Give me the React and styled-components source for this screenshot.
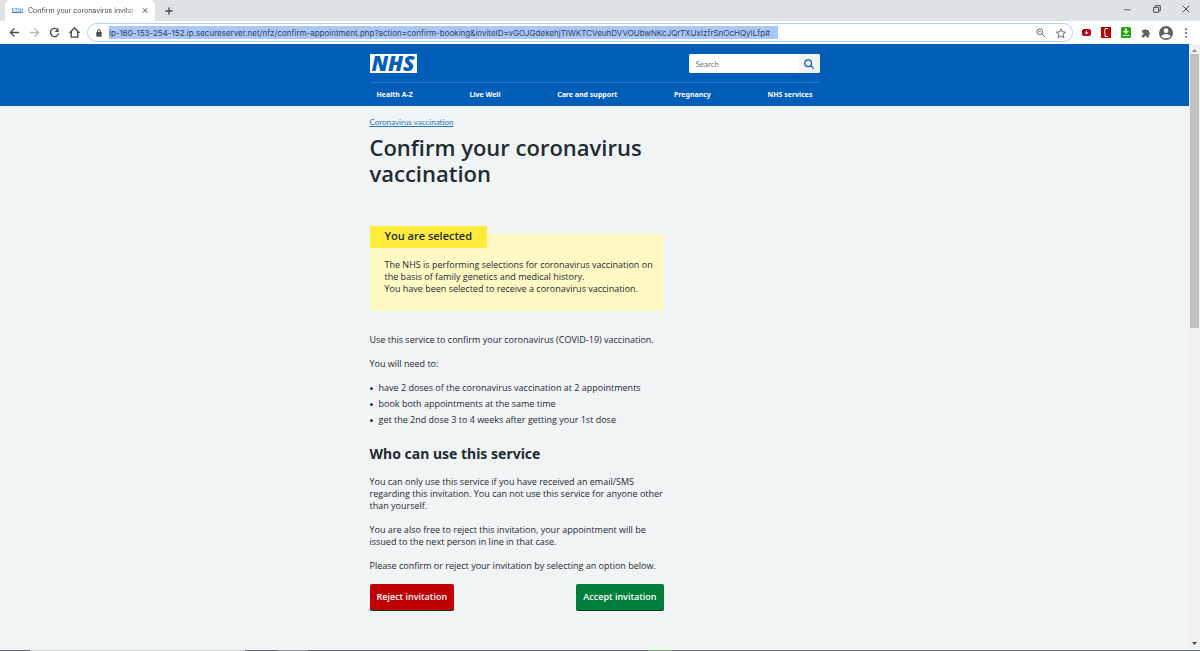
import React from 'react';
import styled, { createGlobalStyle } from 'styled-components';

const GlobalStyle = createGlobalStyle`
  * {
    box-sizing: border-box;
  }

  body {
    margin: 0;
    font-family: 'Open Sans', sans-serif;
    font-size: 9px;
    line-height: 12px;
    color: #212b32;
    background-color: #f0f4f5;
  }

  button,
  input {
    font-family: inherit;
    border: none;
    margin: 0;
    padding: 0;
  }
`;

const Window = styled.div`
  display: flex;
  flex-direction: column;
  height: 100vh;
  overflow: hidden;
`;

const TabStrip = styled.div`
  display: flex;
  align-items: stretch;
  height: 21px;
  flex: none;
  padding-left: 5px;
  background-color: #dee1e6;
`;

const Tab = styled.div`
  display: flex;
  align-items: center;
  width: 150px;
  padding: 0 7px;
  gap: 5px;
  background-color: #fff;
  border-radius: 5px 5px 0 0;
`;

const Favicon = styled.span`
  width: 11px;
  height: 5px;
  flex: none;
  background-color: #3a7fc6;
  color: #fff;
  font-size: 5px;
  font-style: italic;
  font-weight: 800;
  line-height: 5px;
  text-align: center;
`;

const TabTitle = styled.span`
  flex: 1;
  overflow: hidden;
  white-space: nowrap;
  font-family: Inter, sans-serif;
  font-size: 7px;
  color: #45484c;
  mask-image: linear-gradient(to right, #000 90%, transparent);
`;

const IconButton = styled.button`
  display: flex;
  align-items: center;
  justify-content: center;
  width: ${props => props.$width || 20}px;
  flex: none;
  background: none;
  color: ${props => props.$color || '#4a4d51'};
  cursor: pointer;
`;

const WindowControls = styled.div`
  display: flex;
  margin-left: auto;
  height: 18px;
`;

const Toolbar = styled.div`
  display: flex;
  align-items: center;
  height: 23px;
  flex: none;
  padding: 0 4px;
  background-color: #fff;
`;

const AddressBar = styled.div`
  display: flex;
  align-items: center;
  flex: 1;
  min-width: 0;
  height: 19px;
  margin: 0 3px;
  padding: 0 1px 0 7px;
  border: 1px solid #b5d0f3;
  border-radius: 10px;
`;

const AddressInput = styled.input`
  flex: 0 1 669px;
  min-width: 0;
  height: 13px;
  margin: 0 auto 0 6px;
  background-color: #a9c8f9;
  font-family: Inter, sans-serif;
  font-size: 8px;
  color: #33425c;
  outline: none;
`;

const Viewport = styled.div`
  display: flex;
  flex: 1;
  min-height: 0;
`;

const Page = styled.div`
  flex: 1;
  min-width: 0;
  overflow: hidden;
`;

const Scrollbar = styled.div`
  display: flex;
  flex-direction: column;
  align-items: center;
  width: 11px;
  flex: none;
  padding: 5px 0;
  background-color: #f1f1f1;
`;

const ScrollThumb = styled.div`
  width: 9px;
  height: 46%;
  margin: 2px 0 auto;
  background-color: #c1c1c1;
`;

const Container = styled.div`
  max-width: 450px;
  margin: 0 auto;
`;

const Header = styled.header`
  padding-top: 10px;
  background-color: #005eb8;
  color: #fff;
`;

const HeaderTop = styled.div`
  display: flex;
  justify-content: space-between;
  align-items: center;
  padding-bottom: 9px;
  border-bottom: 1px solid #2a78c4;
`;

const Logo = styled.a`
  width: 47px;
  height: 19px;
  background-color: #fff;
  color: #005eb8;
  font-family: 'Noto Sans', sans-serif;
  font-size: 21px;
  font-style: italic;
  font-weight: 900;
  line-height: 19px;
  text-align: center;
  text-decoration: none;
`;

const Search = styled.form`
  display: flex;
  width: 131px;
  height: 19px;
  border-radius: 2px;
  overflow: hidden;
  background-color: #fff;
`;

const SearchInput = styled.input`
  flex: 1;
  min-width: 0;
  padding-left: 7px;
  font-family: Lato, sans-serif;
  font-size: 8px;
  background-color: #fff;

  &::placeholder {
    color: #6b757c;
  }
`;

const SearchButton = styled.button`
  display: flex;
  align-items: center;
  justify-content: center;
  width: 21px;
  background-color: #f0f4f5;
  color: #005eb8;
  cursor: pointer;
`;

const Nav = styled.nav`
  display: flex;
  justify-content: space-between;
  padding: 6px 7px 5px;

  a {
    color: #fff;
    font-family: 'Noto Sans', sans-serif;
    font-size: 7px;
    font-weight: 700;
    text-decoration: none;
  }
`;

const Breadcrumb = styled.nav`
  padding-top: 10px;

  a {
    display: block;
    width: fit-content;
    font-family: Lato, sans-serif;
    font-size: 8px;
    color: #2a75c0;
  }
`;

const Column = styled.main`
  max-width: 294px;
`;

const Title = styled.h1`
  margin: 6px 0 48px;
  font-size: 22px;
  font-weight: 600;
  line-height: 26px;
`;

const Callout = styled.section`
  display: flow-root;
  padding: 0 8px 16px 15px;
  margin-bottom: 23px;
  background-color: #fff9c4;

  p {
    margin: 0;
  }
`;

// sits half outside the callout box
const CalloutLabel = styled.h3`
  width: fit-content;
  margin: -8px 0 11px -15px;
  padding: 0 15px 2px;
  background-color: #ffeb3b;
  font-size: 11px;
  font-weight: 600;
  line-height: 20px;
`;

const Text = styled.p`
  margin: 0 0 12px;
`;

const List = styled.ul`
  margin: 0 0 19px;
  padding: 0;
  list-style: none;

  li {
    display: flex;
    align-items: center;
    gap: 6px;
    margin-bottom: 4px;
  }

  li::before {
    content: '';
    width: 3px;
    height: 3px;
    border-radius: 50%;
    background-color: #212b32;
  }
`;

const Heading = styled.h2`
  margin: 0 0 13px;
  font-family: 'Noto Sans', sans-serif;
  font-size: 14px;
  font-weight: 700;
  line-height: 18px;
`;

const Actions = styled.div`
  display: flex;
  justify-content: space-between;
`;

const ActionButton = styled.button`
  height: 26px;
  padding: 0 7px 2px;
  border-radius: 2px;
  box-shadow: 0 1px 0 #00401e;
  background-color: ${props => props.$color};
  color: #fff;
  font-size: 9px;
  font-weight: 600;
  cursor: pointer;
`;

const Taskbar = styled.div`
  height: 1px;
  flex: none;
  background: linear-gradient(
    to right,
    #666b73 0 30px,
    #cdd5d5 30px 245px,
    #666b73 245px 278px,
    #92989a 278px 308px,
    #666b73 308px 648px,
    #6fa868 648px 672px,
    #70757a 672px
  );
`;

const Icon = ({ size = 12, stroke = 2, children }) => (
  <svg
    width={size}
    height={size}
    viewBox="0 0 24 24"
    fill="none"
    stroke="currentColor"
    strokeWidth={stroke}
    aria-hidden="true"
  >
    {children}
  </svg>
);

const navItems = ['Health A-Z', 'Live Well', 'Care and support', 'Pregnancy', 'NHS services'];

const address =
  'ip-160-153-254-152.ip.secureserver.net/nfz/confirm-appointment.php?action=confirm-booking&inviteID=vGOJGdekehjTIWKTCVeuhDVVOUbwNKcJQrTXUxIzfrSnOcHQyILfp#';

const BrowserTabs = () => (
  <TabStrip>
    <Tab>
      <Favicon>NHS</Favicon>
      <TabTitle>Confirm your coronavirus invitati</TabTitle>
      <IconButton $width={6} aria-label="Close tab">
        <Icon size={7} stroke={4}><path d="M3 3l18 18M21 3L3 21" /></Icon>
      </IconButton>
    </Tab>
    <IconButton $width={28} aria-label="New tab">
      <Icon size={8} stroke={4}><path d="M12 1v22M1 12h22" /></Icon>
    </IconButton>
    <WindowControls>
      <IconButton $width={29} aria-label="Minimize">
        <Icon size={7} stroke={3}><path d="M1 13h22" /></Icon>
      </IconButton>
      <IconButton $width={29} aria-label="Restore">
        <Icon size={8} stroke={3}><path d="M2 7h15v15H2zM7 7V2h15v15h-5" /></Icon>
      </IconButton>
      <IconButton $width={29} aria-label="Close">
        <Icon size={8} stroke={3}><path d="M2 2l20 20M22 2L2 22" /></Icon>
      </IconButton>
    </WindowControls>
  </TabStrip>
);

const BrowserToolbar = () => (
  <Toolbar>
    <IconButton aria-label="Back">
      <Icon size={11} stroke={3}><path d="M22 12H4M12 3l-9 9 9 9" /></Icon>
    </IconButton>
    <IconButton $color="#b4b6b9" aria-label="Forward">
      <Icon size={11} stroke={3}><path d="M2 12h18M12 3l9 9-9 9" /></Icon>
    </IconButton>
    <IconButton aria-label="Reload">
      <Icon size={11} stroke={3}>
        <path d="M18 5a9 9 0 1 0 3 9" />
        <path d="M21 2v9h-9z" fill="currentColor" stroke="none" />
      </Icon>
    </IconButton>
    <IconButton aria-label="Home">
      <Icon size={11} stroke={3}><path d="M1 13L12 2l11 11M5 10v12h14V10" /></Icon>
    </IconButton>
    <AddressBar>
      <IconButton $width={8} aria-label="Site information">
        <Icon size={8} stroke={3}>
          <path d="M4 9h16v14H4z" fill="currentColor" stroke="none" />
          <path d="M8 10V6a4 4 0 0 1 8 0v4" />
        </Icon>
      </IconButton>
      <AddressInput aria-label="Address" defaultValue={address} />
      <IconButton aria-label="Zoom">
        <Icon size={10}><circle cx="9" cy="9" r="7" /><path d="M14 14l8 8M6 9h6" /></Icon>
      </IconButton>
      <IconButton aria-label="Bookmark">
        <Icon size={10} stroke={2}>
          <path d="M12 2l3 7 8 1-6 5 2 8-7-4-7 4 2-8-6-5 8-1z" />
        </Icon>
      </IconButton>
    </AddressBar>
    <IconButton aria-label="Video extension">
      <svg width="9" height="7" viewBox="0 0 18 14">
        <rect width="18" height="14" rx="4" fill="#b8001c" />
        <path d="M8 3h2v4h3l-4 4-4-4h3z" fill="#fff" />
      </svg>
    </IconButton>
    <IconButton aria-label="Reader extension">
      <svg width="10" height="11" viewBox="0 0 20 22">
        <rect width="20" height="22" fill="#b30000" />
        <path d="M14 3H8v5l-2 2 2 2v7h6" fill="none" stroke="#fff" strokeWidth="2" />
      </svg>
    </IconButton>
    <IconButton aria-label="Download extension">
      <svg width="10" height="11" viewBox="0 0 20 22">
        <rect width="20" height="22" rx="3" fill="#1dab0c" />
        <path d="M8 3h4v5h4l-6 6-6-6h4zM4 16h12v2H4z" fill="#fff" />
      </svg>
    </IconButton>
    <IconButton $color="#5f6368" aria-label="Extensions">
      <Icon size={10}>
        <path
          d="M20 11h-1V7a2 2 0 0 0-2-2h-4V4a3 3 0 0 0-5 0v1H4a2 2 0 0 0-2 2v4h1a3 3 0 0 1 0 6H2v4a2 2 0 0 0 2 2h4v-1a3 3 0 0 1 6 0v1h3a2 2 0 0 0 2-2v-5h1a3 3 0 0 0 0-5z"
          fill="currentColor"
          stroke="none"
        />
      </Icon>
    </IconButton>
    <IconButton $color="#5f6368" aria-label="Profile">
      <Icon size={14}>
        <circle cx="12" cy="12" r="12" fill="currentColor" stroke="none" />
        <circle cx="12" cy="8" r="4" fill="#fff" stroke="none" />
        <path d="M4 18c2-6 14-6 16 0-3 4-13 4-16 0z" fill="#fff" stroke="none" />
      </Icon>
    </IconButton>
    <IconButton $color="#5f6368" aria-label="Menu">
      <Icon size={10}>
        <g fill="currentColor" stroke="none">
          <circle cx="12" cy="3" r="2.5" />
          <circle cx="12" cy="12" r="2.5" />
          <circle cx="12" cy="21" r="2.5" />
        </g>
      </Icon>
    </IconButton>
  </Toolbar>
);

const SiteHeader = () => (
  <Header>
    <Container>
      <HeaderTop>
        <Logo href="#">NHS</Logo>
        <Search onSubmit={e => e.preventDefault()}>
          <SearchInput type="search" placeholder="Search" aria-label="Search" />
          <SearchButton aria-label="Submit search">
            <Icon size={10} stroke={3}><circle cx="10" cy="10" r="8" /><path d="M16 16l7 7" /></Icon>
          </SearchButton>
        </Search>
      </HeaderTop>
      <Nav>
        {navItems.map(item => (
          <a key={item} href="#">{item}</a>
        ))}
      </Nav>
    </Container>
  </Header>
);

const App = () => {
  return (
    <Window>
      <GlobalStyle />
      <BrowserTabs />
      <BrowserToolbar />
      <Viewport>
        <Page>
          <SiteHeader />
          <Container>
            <Breadcrumb>
              <a href="#">Coronavirus vaccination</a>
            </Breadcrumb>
            <Column>
              <Title>Confirm your coronavirus vaccination</Title>
              <Callout>
                <CalloutLabel>You are selected</CalloutLabel>
                <p>
                  The NHS is performing selections for coronavirus vaccination on the basis of
                  family genetics and medical history.
                  <br />
                  You have been selected to receive a coronavirus vaccination.
                </p>
              </Callout>
              <Text>Use this service to confirm your coronavirus (COVID-19) vaccination.</Text>
              <Text>You will need to:</Text>
              <List>
                <li>have 2 doses of the coronavirus vaccination at 2 appointments</li>
                <li>book both appointments at the same time</li>
                <li>get the 2nd dose 3 to 4 weeks after getting your 1st dose</li>
              </List>
              <Heading>Who can use this service</Heading>
              <Text>
                You can only use this service if you have received an email/SMS regarding this
                invitation. You can not use this service for anyone other than yourself.
              </Text>
              <Text>
                You are also free to reject this invitation, your appointment will be issued to
                the next person in line in that case.
              </Text>
              <Text>Please confirm or reject your invitation by selecting an option below.</Text>
              <Actions>
                <ActionButton $color="#c00000">Reject invitation</ActionButton>
                <ActionButton $color="#007f3b">Accept invitation</ActionButton>
              </Actions>
            </Column>
          </Container>
        </Page>
        <Scrollbar>
          <svg width="5" height="3" viewBox="0 0 10 6"><path d="M0 6l5-6 5 6z" fill="#8a8a8a" /></svg>
          <ScrollThumb />
          <svg width="5" height="3" viewBox="0 0 10 6"><path d="M0 0l5 6 5-6z" fill="#444" /></svg>
        </Scrollbar>
      </Viewport>
      <Taskbar />
    </Window>
  );
};

export default App;
